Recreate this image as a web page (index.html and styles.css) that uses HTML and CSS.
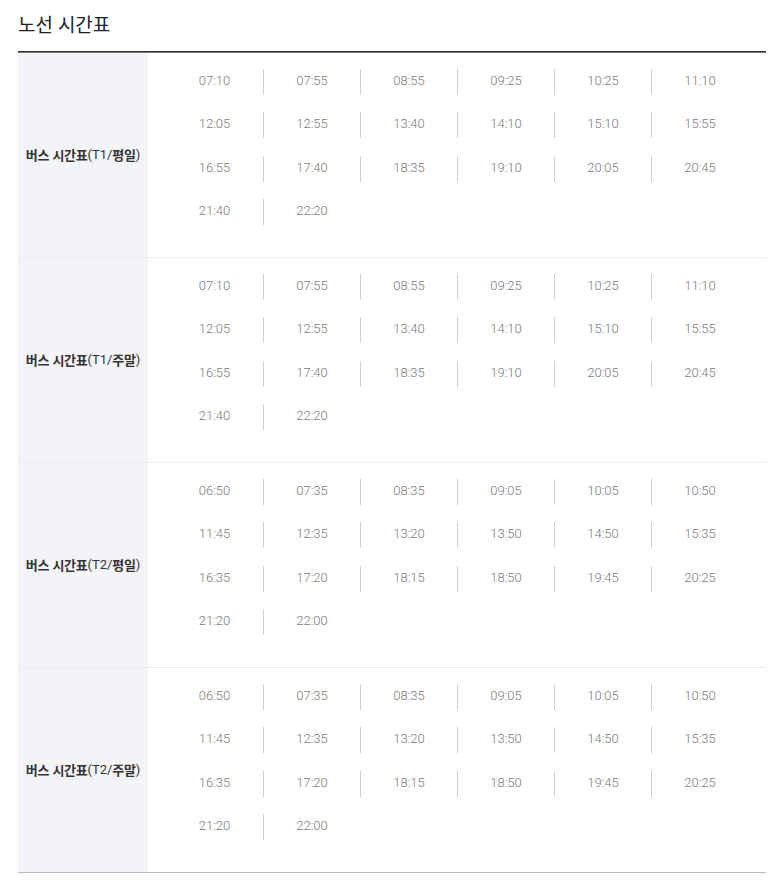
FILE: index.html
```html
<!DOCTYPE html>
<html lang="ko">
<head>
<meta charset="utf-8">
<link rel="stylesheet" href="styles.css">
</head>
<body>
<h2 class="title">노선 시간표</h2>
<div class="table">
  <div class="section">
    <div class="label">버스 시간표<span class="lat">(T1/</span>평일<span class="lat">)</span></div>
    <div class="times">
      <span>07:10</span><span>07:55</span><span>08:55</span><span>09:25</span><span>10:25</span><span>11:10</span>
      <span>12:05</span><span>12:55</span><span>13:40</span><span>14:10</span><span>15:10</span><span>15:55</span>
      <span>16:55</span><span>17:40</span><span>18:35</span><span>19:10</span><span>20:05</span><span>20:45</span>
      <span>21:40</span><span>22:20</span>
    </div>
  </div>
  <div class="section">
    <div class="label">버스 시간표<span class="lat">(T1/</span>주말<span class="lat">)</span></div>
    <div class="times">
      <span>07:10</span><span>07:55</span><span>08:55</span><span>09:25</span><span>10:25</span><span>11:10</span>
      <span>12:05</span><span>12:55</span><span>13:40</span><span>14:10</span><span>15:10</span><span>15:55</span>
      <span>16:55</span><span>17:40</span><span>18:35</span><span>19:10</span><span>20:05</span><span>20:45</span>
      <span>21:40</span><span>22:20</span>
    </div>
  </div>
  <div class="section">
    <div class="label">버스 시간표<span class="lat">(T2/</span>평일<span class="lat">)</span></div>
    <div class="times">
      <span>06:50</span><span>07:35</span><span>08:35</span><span>09:05</span><span>10:05</span><span>10:50</span>
      <span>11:45</span><span>12:35</span><span>13:20</span><span>13:50</span><span>14:50</span><span>15:35</span>
      <span>16:35</span><span>17:20</span><span>18:15</span><span>18:50</span><span>19:45</span><span>20:25</span>
      <span>21:20</span><span>22:00</span>
    </div>
  </div>
  <div class="section">
    <div class="label">버스 시간표<span class="lat">(T2/</span>주말<span class="lat">)</span></div>
    <div class="times">
      <span>06:50</span><span>07:35</span><span>08:35</span><span>09:05</span><span>10:05</span><span>10:50</span>
      <span>11:45</span><span>12:35</span><span>13:20</span><span>13:50</span><span>14:50</span><span>15:35</span>
      <span>16:35</span><span>17:20</span><span>18:15</span><span>18:50</span><span>19:45</span><span>20:25</span>
      <span>21:20</span><span>22:00</span>
    </div>
  </div>
</div>
</body>
</html>
```
FILE: styles.css
```css
html, body {
  margin: 0;
  padding: 0;
  background: #fff;
}
body {
  padding: 0 9px 0 18px;
  font-family: "Noto Sans CJK KR", "Noto Sans", sans-serif;
}
.title {
  margin: 0;
  padding-top: 9px;
  height: 42px;
  font-size: 19px;
  font-weight: 400;
  color: #222;
  line-height: 30px;
  letter-spacing: -0.1px;
}
.table {
  border-top: 1px solid #333;
  border-bottom: 1px solid #bbb;
}
.section {
  display: flex;
  border-top: 1px solid #ececec;
}
.section:first-child {
  border-top: 1px solid #777;
}
.label {
  width: 130px;
  flex: none;
  background: #f3f4f8;
  display: flex;
  align-items: center;
  justify-content: center;
  font-size: 13px;
  font-weight: 700;
  color: #333;
  letter-spacing: -0.3px;
}
.lat {
  font-family: Roboto, "Noto Sans", sans-serif;
  font-weight: 400;
  letter-spacing: 0;
}
.times {
  flex: 1;
  display: grid;
  grid-template-columns: repeat(6, 97px);
  grid-auto-rows: 26px;
  row-gap: 17.33px;
  padding: 16px 18px 32px;
  align-content: start;
}
.times span {
  font-family: Roboto, "Noto Sans", sans-serif;
  font-weight: 300;
  font-size: 13px;
  color: #7a7a7a;
  text-align: center;
  line-height: 24px;
  border-left: 1px solid #cfcfcf;
}
.times span:nth-child(6n+1) {
  border-left: none;
}
```
